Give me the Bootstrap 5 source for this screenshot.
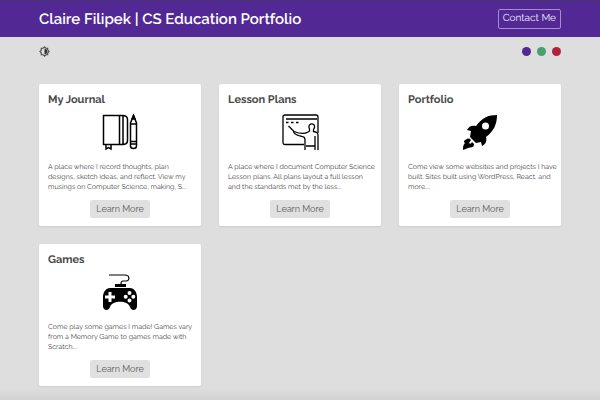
<!DOCTYPE html>
<html lang="en">
<head>
<meta charset="utf-8">
<meta name="viewport" content="width=device-width, initial-scale=1">
<title>Claire Filipek | CS Education Portfolio</title>
<link rel="stylesheet" href="https://cdn.jsdelivr.net/npm/bootstrap@5.3.0/dist/css/bootstrap.min.css">
<style>
body { background: linear-gradient(#dedede 97%, #d2d2d2) #dedede; color: #4a4a4a; font-family: Raleway, Lato, sans-serif; text-rendering: geometricPrecision; min-height: 100vh; }
.gutter { padding-left: 39px; padding-right: 39px; }
.site-header { background: #522894; height: 37px; border-top: 1px solid #49336f; }
.site-title { font-size: 15px; line-height: 20px; font-weight: 600; }
.contact { color: #f2edf8; border: 1px solid #a78dcc; border-radius: 2px; font-size: 10px; line-height: 17px; padding: 0 4px 1px; }
.toolbar { height: 28px; }
.swatches { gap: 6px; }
.swatch { width: 9px; height: 9px; }
.purple { background: #522894; }
.green { background: #4a9f70; }
.red { background: #b32039; }
.tiles { display: grid; grid-template-columns: repeat(3, 1fr); gap: 18px; padding-top: 19px; padding-bottom: 14px; }
.tile { border: 0; border-radius: 2px; padding: 8px 9px; box-shadow: 0 1px 2px #00000014; color: #4a4a4a; }
.tile h2 { font-size: 11px; line-height: 16px; font-weight: 700; margin-bottom: 6px; }
.tile svg { width: 36px; height: 36px; margin-bottom: 12px; color: #000; overflow: visible; }
.tile p { font-size: 7px; line-height: 10px; margin-bottom: 8px; white-space: nowrap; }
.learn { background: #e0e0e0; color: #5c5c5c; border: 0; border-radius: 2px; font-size: 9px; line-height: 14px; padding: 2px 6px; white-space: nowrap; }
</style>
<script src="https://cdn.jsdelivr.net/npm/bootstrap@5.3.0/dist/js/bootstrap.bundle.min.js"></script>
</head>
<body>
<header class="site-header gutter d-flex align-items-center justify-content-between">
  <h1 class="site-title text-white mb-0">Claire Filipek | CS Education Portfolio</h1>
  <a class="contact text-decoration-none" href="#contact">Contact Me</a>
</header>
<div class="toolbar gutter d-flex align-items-center justify-content-between">
  <button class="btn p-0 border-0 d-flex" type="button" aria-label="Toggle theme">
    <svg width="11" height="11" viewBox="0 0 24 24"><path d="M12 2l3 3h4v4l3 3-3 3v4h-4l-3 3-3-3H5v-4l-3-3 3-3V5h4z" fill="none" stroke="#4a4a4a" stroke-width="2.500"/><path d="M12 6a6 6 0 0 1 0 12z" fill="#333"/></svg>
  </button>
  <div class="swatches d-flex">
    <button class="swatch purple btn p-0 border-0 rounded-circle" type="button" aria-label="Purple theme"></button>
    <button class="swatch green btn p-0 border-0 rounded-circle" type="button" aria-label="Green theme"></button>
    <button class="swatch red btn p-0 border-0 rounded-circle" type="button" aria-label="Red theme"></button>
  </div>
</div>
<main class="tiles gutter">
  <article class="tile card">
    <h2>My Journal</h2>
    <svg class="mx-auto" viewBox="0 0 36 36" fill="none" stroke="currentColor" stroke-width="1.5"><path d="M1.500 1.500h19q5 0 5 4v21q0 4-5 4h-19zM17.500 1.500v29M21 1.500v29M4 31v4l2.500-1.500L9 35v-4M28.500 9v23q0 2.500 3 2.500t3-2.500V9l-3-7.500zM28.500 10h6M28.500 27.500h6M28.500 30h6"/><path d="M30 5l1.500-3.500L33 5z" fill="currentColor"/></svg>
    <p>A place where I record thoughts, plan<br>designs, sketch ideas, and reflect. View my<br>musings on Computer Science, making, S...</p>
    <button class="learn mx-auto" type="button">Learn More</button>
  </article>
  <article class="tile card">
    <h2>Lesson Plans</h2>
    <svg class="mx-auto" viewBox="0 0 36 36" fill="none" stroke="currentColor" stroke-width="1.3"><path d="M22 30.500H3q-2 0-2-2V3q0-2 2-2h31q2 0 2 2v16M4 5h31"/><path d="M4 8.500h13" stroke-dasharray="2.500 2.500"/><path d="M6.500 12l5.500 5.500c5 2 10 3 14 .5l1.500-1v-2c-3-6 6-7 5-1.500l-1 2v2c3 .5 4.500 1 4.500 4V36M11.500 17.500c0 2 2 3 6.500 4.500 4 1 5 1 5 4V36M33 22v14M24 32h9"/></svg>
    <p>A place where I document Computer Science<br>Lesson plans. All plans layout a full lesson<br>and the standards met by the less...</p>
    <button class="learn mx-auto" type="button">Learn More</button>
  </article>
  <article class="tile card">
    <h2>Portfolio</h2>
    <svg class="mx-auto" viewBox="0 0 36 36" fill="currentColor"><path fill-rule="evenodd" d="M35 1C26 1 20 4 14 12c-4-1-7 0-9 4l4 1-1 6 6 6 5-1 1 4c4-2 5-5 4-9C32 17 35 10 35 1zM23.500 8.500a3.500 3.500 0 1 1 0 7 3.500 3.500 0 0 1 0-7z"/><path d="M5 25c2-1 3 0 4 1l-2 3c1 1 2 1 3-1l2 2c0 4-3 3-6 4l-5 2c0-3 0-5 2-7-2-1-1-3 2-4z"/></svg>
    <p>Come view some websites and projects I have<br>built. Sites built using WordPress, React, and<br>more....</p>
    <button class="learn mx-auto" type="button">Learn More</button>
  </article>
  <article class="tile card">
    <h2>Games</h2>
    <svg class="mx-auto" viewBox="0 0 36 36" fill="currentColor"><path d="M7 1h16c5 0 5 6 1 6h-3q-2 0-2 3" fill="none" stroke="currentColor" stroke-width="1.200"/><path d="M13 10h11v3H13z"/><path fill-rule="evenodd" d="M8 14h20c4 0 7 4 7 9v9c0 5-6 5-7 1-2-7-18-7-20 0-1 4-7 4-7-1v-9c0-5 3-9 7-9zM6.500 18v3.500H3v3h3.500V28h3v-3.500H13v-3H9.500V18zM27.500 17a2 2 0 1 1 0 4 2 2 0 0 1 0-4zM27.500 24.500a2 2 0 1 1 0 4 2 2 0 0 1 0-4zM23.700 20.800a2 2 0 1 1 0 4 2 2 0 0 1 0-4zM31.300 20.800a2 2 0 1 1 0 4 2 2 0 0 1 0-4z"/></svg>
    <p>Come play some games I made! Games vary<br>from a Memory Game to games made with<br>Scratch....</p>
    <button class="learn mx-auto" type="button">Learn More</button>
  </article>
</main>
</body>
</html>
